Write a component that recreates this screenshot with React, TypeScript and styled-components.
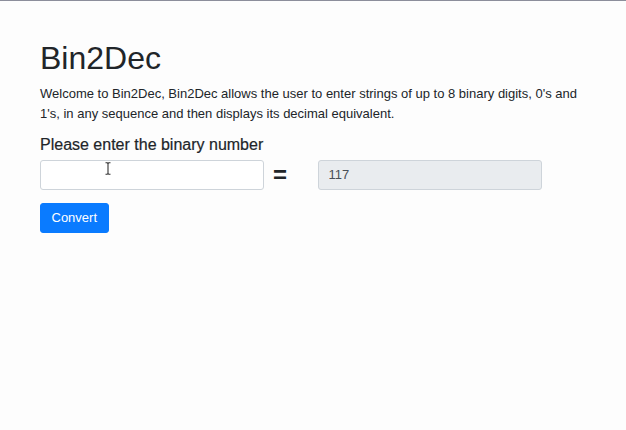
import React, { useState } from "react"
import styled, { createGlobalStyle } from "styled-components"

const GlobalStyle = createGlobalStyle`
    html, body {
        margin: 0;
        padding: 0;
        background: #fdfdfd;
    }
    body {
        font-family: "Liberation Sans", Arial, Helvetica, sans-serif;
        color: #212529;
        font-size: 13px;
        line-height: 1.5;
    }
    * {
        box-sizing: border-box;
    }
`

const Page = styled.div`
    min-height: 430px;
    border-top: 1px solid #8c8e9b;
`

const Container = styled.main`
    width: 546px;
    padding-top: 38px;
    margin-left: 40px;
`

const Title = styled.h1`
    font-size: 32px;
    font-weight: 500;
    line-height: 1.2;
    margin: 0 0 7px;
`

const Paragraph = styled.p`
    margin: 0 0 12px;
`

const Label = styled.h5`
    font-size: 16px;
    font-weight: 500;
    line-height: 1.2;
    margin: 0 0 5px;
    -webkit-text-stroke: 0.2px #212529;
`

const Row = styled.div`
    display: grid;
    grid-template-columns: 224px 54px 224px;
    align-items: center;
    margin-bottom: 13px;
`

const InputWrap = styled.div`
    position: relative;
`

const Field = styled.input<{ $readOnly?: boolean }>`
    display: block;
    width: 100%;
    height: 30px;
    padding: 4.8px 9.6px;
    font-family: inherit;
    font-size: 13px;
    color: #495057;
    background: ${({ $readOnly }) => ($readOnly ? "#e9ecef" : "#fff")};
    border: 1px solid #ced4da;
    border-radius: 3px;
    outline: none;
`

const Equals = styled.span`
    font-size: 24px;
    font-weight: 700;
    line-height: 1;
    padding-left: 9px;
`

const Cursor = styled.svg`
    position: absolute;
    left: 65px;
    top: 2px;
    pointer-events: none;
`

const Button = styled.button`
    font-family: inherit;
    font-size: 13px;
    line-height: 1.5;
    color: #fff;
    background: #0a7bff;
    border: 1px solid #0a7bff;
    border-radius: 3px;
    padding: 4.3px 10.5px;
    cursor: pointer;
`

export default function App() {
    const [binary, setBinary] = useState("")
    const decimal = "117"

    return (
        <Page>
            <GlobalStyle />
            <Container>
                <Title>Bin2Dec</Title>
                <Paragraph>
                    Welcome to Bin2Dec, Bin2Dec allows the user to enter strings of up to 8 binary digits, 0's and 1's, in any sequence and then displays its decimal equivalent.
                </Paragraph>
                <Label>Please enter the binary number</Label>
                <Row>
                    <InputWrap>
                        <Field value={binary} onChange={(e) => setBinary(e.target.value)} />
                        <Cursor width="6" height="13" viewBox="0 0 6 13">
                            <path d="M0.5 0.8 H2.3 L3 1.6 L3.7 0.8 H5.5 M3 1.6 V11.4 M0.5 12.2 H2.3 L3 11.4 L3.7 12.2 H5.5" fill="none" stroke="#333" strokeWidth="1.1" />
                        </Cursor>
                    </InputWrap>
                    <Equals>=</Equals>
                    <Field $readOnly readOnly value={decimal} />
                </Row>
                <Button>Convert</Button>
            </Container>
        </Page>
    )
}
